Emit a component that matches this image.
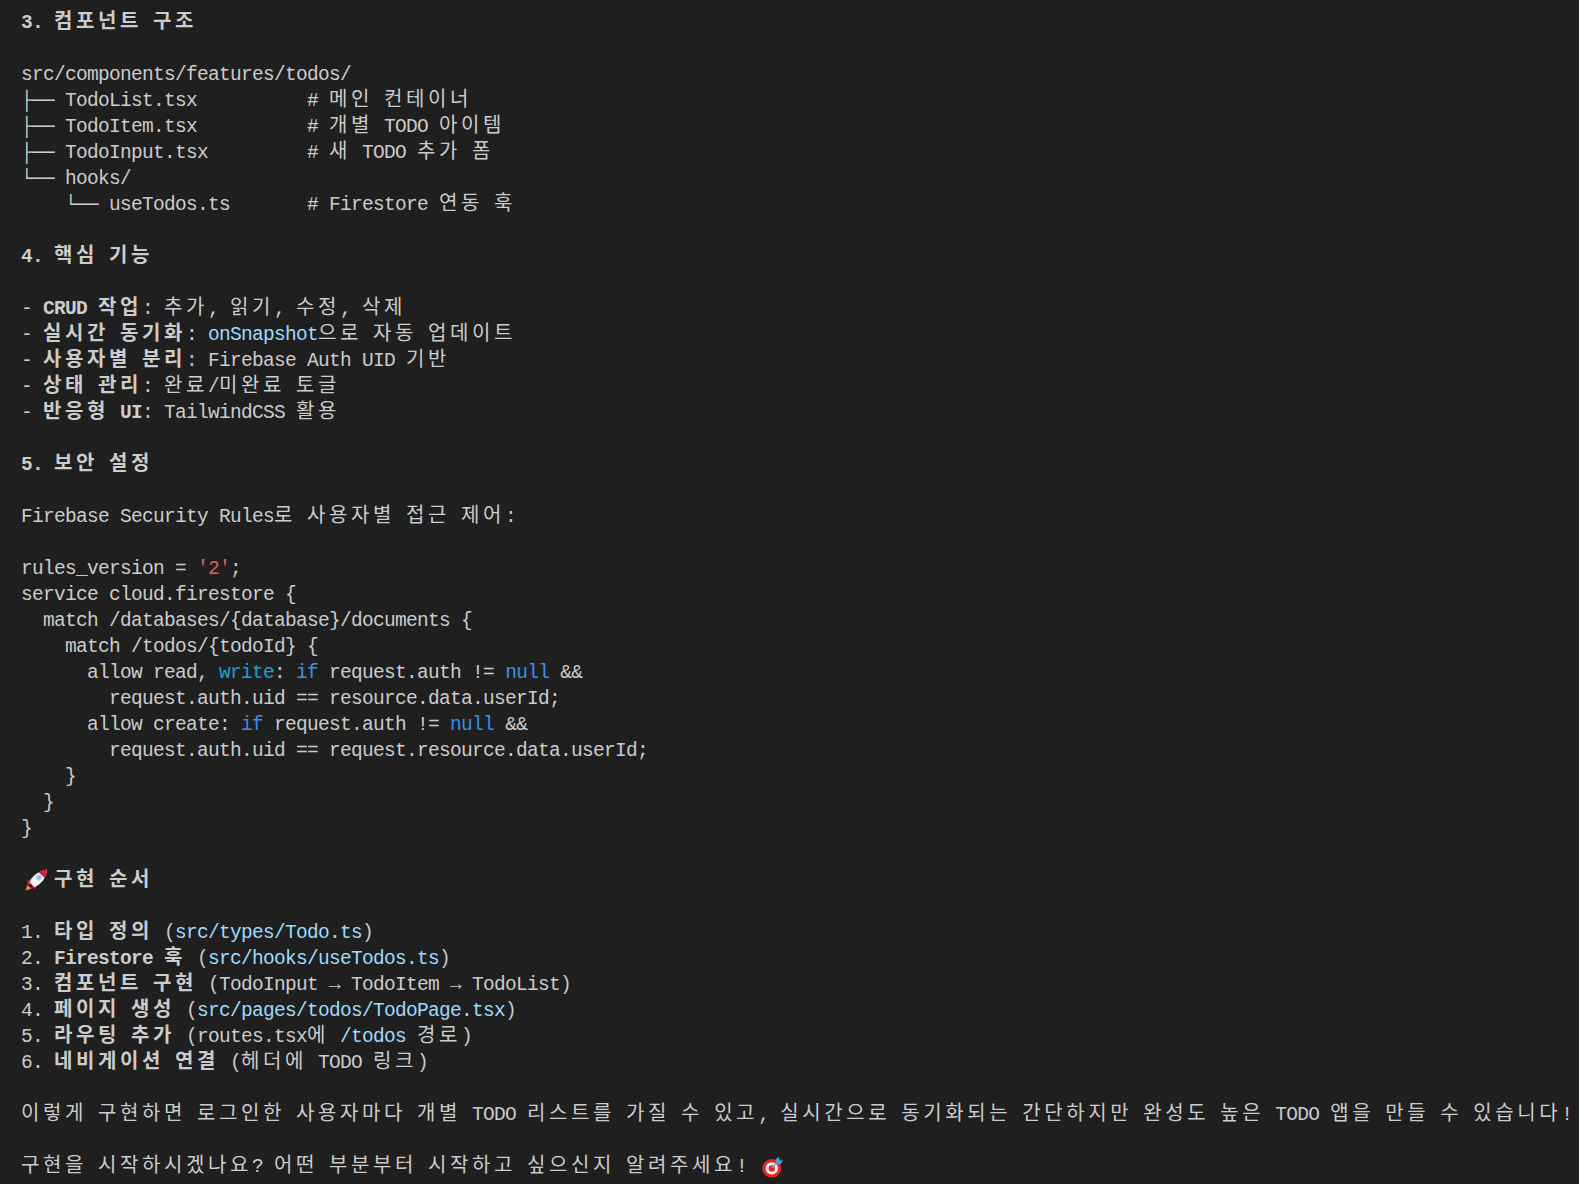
import React from "react";

function K({ t }: { t: string }) {
  const parts = t.split(/([\uAC00-\uD7A3]+)/);
  return (
    <>
      {parts.map((p, i) =>
        i % 2 === 1 ? (
          <span key={i} className="font-['Noto_Sans_CJK_KR','Liberation_Sans',sans-serif] text-[20px] tracking-[3.6px] leading-none">
            {p}
          </span>
        ) : (
          <React.Fragment key={i}>{p}</React.Fragment>
        )
      )}
    </>
  );
}

function B({ t }: { t: string }) {
  return <b className="font-bold"><K t={t} /></b>;
}
function P({ t }: { t: string }) {
  return <span className="text-[#9cdcfe]">{t}</span>;
}
function Kw({ t }: { t: string }) {
  return <span className="text-[#3b8eea]">{t}</span>;
}

function L({ children }: { children?: React.ReactNode }) {
  return <div className="h-[26px] leading-[26px] whitespace-pre">{children}</div>;
}

function Rocket() {
  return (
    <svg width="24" height="22" viewBox="0 0 24 22" className="inline-block align-[-5px] ml-[3px] mr-[6px]">
      <path d="M1.5 21.5 L3.2 16 L7.8 19.6 Z" fill="#f4812c" />
      <path d="M7 9.5 L2.6 12.2 L4.6 16.4 L9 13 Z" fill="#d01a45" />
      <path d="M14 15.5 L11.2 20 L7.2 18 L10 14 Z" fill="#d01a45" />
      <path d="M5.6 13.4 C8 6.5 14.5 2 23 0.5 C22.4 8.5 17.5 15 10.5 18 Z" fill="#f7f3f3" />
      <path d="M14.5 3.2 C17.2 1.8 20 0.9 23 0.5 C22.8 3.6 22 6.4 20.6 9 Z" fill="#d81b47" />
      <circle cx="14.8" cy="8.6" r="2.6" fill="#7cc4ea" stroke="#c9d6de" strokeWidth="0.8" />
    </svg>
  );
}

function Target() {
  return (
    <svg width="22" height="22" viewBox="0 0 22 22" className="inline-block align-[-6px] ml-[4px]">
      <circle cx="9.8" cy="12.4" r="9.4" fill="#e8232a" />
      <circle cx="9.8" cy="12.4" r="6.2" fill="#f6f2f2" />
      <circle cx="9.8" cy="12.4" r="3.2" fill="#e8232a" />
      <path d="M10 12 L17 4.5" stroke="#8aa0b0" strokeWidth="1.4" />
      <path d="M13.5 4 L16.5 0.5 L17.6 4.2 L21.5 4.6 L18 8.4 L14 8 Z" fill="#3f9fe0" />
    </svg>
  );
}

export default function App() {
  return (
    <div className="min-h-screen w-full overflow-hidden bg-[#1f1f1f] pt-[10px] pl-[21px] text-[#cccccc] font-['Liberation_Mono',monospace] text-[19.5px] tracking-[-0.7px]">
      <L><B t="3. 컴포넌트 구조" /></L>
      <L />
      <L>src/components/features/todos/</L>
      <L>├── TodoList.tsx          # <K t="메인 컨테이너" /></L>
      <L>├── TodoItem.tsx          # <K t="개별" /> TODO <K t="아이템" /></L>
      <L>├── TodoInput.tsx         # <K t="새" /> TODO <K t="추가 폼" /></L>
      <L>└── hooks/</L>
      <L>    └── useTodos.ts       # Firestore <K t="연동 훅" /></L>
      <L />
      <L><B t="4. 핵심 기능" /></L>
      <L />
      <L>- <B t="CRUD 작업" />: <K t="추가" />, <K t="읽기" />, <K t="수정" />, <K t="삭제" /></L>
      <L>- <B t="실시간 동기화" />: <P t="onSnapshot" /><K t="으로 자동 업데이트" /></L>
      <L>- <B t="사용자별 분리" />: Firebase Auth UID <K t="기반" /></L>
      <L>- <B t="상태 관리" />: <K t="완료" />/<K t="미완료 토글" /></L>
      <L>- <B t="반응형 UI" />: TailwindCSS <K t="활용" /></L>
      <L />
      <L><B t="5. 보안 설정" /></L>
      <L />
      <L>Firebase Security Rules<K t="로 사용자별 접근 제어" />:</L>
      <L />
      <L>rules_version = <span className="text-[#e25d5d]">'2'</span>;</L>
      <L>service cloud.firestore {"{"}</L>
      <L>  match /databases/{"{database}"}/documents {"{"}</L>
      <L>    match /todos/{"{todoId}"} {"{"}</L>
      <L>      allow read, <span className="text-[#1a9fd8]">write</span>: <Kw t="if" /> request.auth != <Kw t="null" /> &amp;&amp;</L>
      <L>        request.auth.uid == resource.data.userId;</L>
      <L>      allow create: <Kw t="if" /> request.auth != <Kw t="null" /> &amp;&amp;</L>
      <L>        request.auth.uid == request.resource.data.userId;</L>
      <L>    {"}"}</L>
      <L>  {"}"}</L>
      <L>{"}"}</L>
      <L />
      <L><Rocket /><B t="구현 순서" /></L>
      <L />
      <L>1. <B t="타입 정의" /> (<P t="src/types/Todo.ts" />)</L>
      <L>2. <B t="Firestore 훅" /> (<P t="src/hooks/useTodos.ts" />)</L>
      <L>3. <B t="컴포넌트 구현" /> (TodoInput → TodoItem → TodoList)</L>
      <L>4. <B t="페이지 생성" /> (<P t="src/pages/todos/TodoPage.tsx" />)</L>
      <L>5. <B t="라우팅 추가" /> (routes.tsx<K t="에" /> <P t="/todos" /> <K t="경로" />)</L>
      <L>6. <B t="네비게이션 연결" /> (<K t="헤더에" /> TODO <K t="링크" />)</L>
      <L />
      <L><K t="이렇게 구현하면 로그인한 사용자마다 개별" /> TODO <K t="리스트를 가질 수 있고" />, <K t="실시간으로 동기화되는 간단하지만 완성도 높은" /> TODO <K t="앱을 만들 수 있습니다" />!</L>
      <L />
      <L><K t="구현을 시작하시겠나요" />? <K t="어떤 부분부터 시작하고 싶으신지 알려주세요" />! <Target /></L>
    </div>
  );
}
